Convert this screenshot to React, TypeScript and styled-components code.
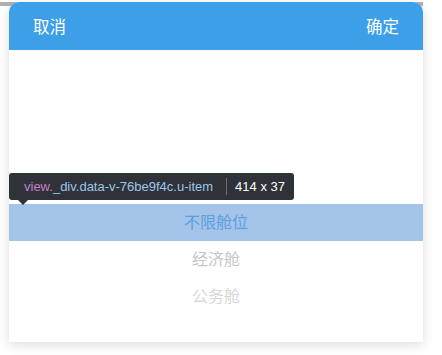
import React from "react";
import styled, { createGlobalStyle } from "styled-components";

const GlobalStyle = createGlobalStyle`
  html, body {
    margin: 0;
    padding: 0;
    background: #ffffff;
  }
  body {
    font-family: "Noto Sans CJK SC", "Liberation Sans", sans-serif;
  }
`;

const Page = styled.div`
  width: 442px;
  height: 355px;
  padding-left: 9px;
  box-sizing: border-box;
  background: linear-gradient(to right, #b1b1b1 0 423px, transparent 423px) top / 100% 4px no-repeat;
`;

const Picker = styled.div`
  position: relative;
  width: 414px;
  margin-top: 2px;
  background: #ffffff;
  border-radius: 10px 10px 0 0;
  box-shadow: 0 3px 12px rgba(0, 0, 0, 0.14);
`;

const Toolbar = styled.div`
  height: 48px;
  display: flex;
  align-items: center;
  justify-content: space-between;
  padding: 0 24px;
  background: #3d9fe8;
  border-radius: 10px 10px 0 0;
`;

const ToolButton = styled.span`
  color: #ffffff;
  font-size: 16.5px;
  line-height: 1;
`;

const Wheel = styled.div`
  padding: 154px 0 27px;
  display: flex;
  flex-direction: column;
`;

const Item = styled.div<{ $active?: boolean; $tone: string }>`
  height: 37px;
  box-sizing: border-box;
  padding-bottom: 3px;
  display: flex;
  align-items: center;
  justify-content: center;
  font-size: 16px;
  color: ${(p) => p.$tone};
  background: ${(p) => (p.$active ? "#a4c3e8" : "transparent")};
`;

const Tooltip = styled.div`
  position: absolute;
  left: 0;
  top: 171px;
  height: 27px;
  box-sizing: border-box;
  display: flex;
  align-items: center;
  padding: 0 9px 0 15px;
  background: #2f3238;
  border-radius: 3px;
  font-family: "Liberation Sans", "Helvetica", sans-serif;
  font-size: 13px;
  white-space: nowrap;

  &::after {
    content: "";
    position: absolute;
    left: 9px;
    bottom: -5px;
    border-left: 5px solid transparent;
    border-right: 5px solid transparent;
    border-top: 5px solid #2f3238;
  }
`;

const Tag = styled.span`
  color: #c880c8;
`;

const Selector = styled.span`
  color: #9ec5ea;
`;

const Divider = styled.span`
  width: 1px;
  height: 17px;
  margin: 0 8px 0 13px;
  background: #6a6d73;
`;

const Size = styled.span`
  color: #ffffff;
`;

const items = [
  { label: "不限舱位", tone: "#5b9fe0", active: true },
  { label: "经济舱", tone: "#c6c6c6" },
  { label: "公务舱", tone: "#d6d6d6" },
];

const App = (): JSX.Element => (
  <>
    <GlobalStyle />
    <Page>
      <Picker>
        <Toolbar>
          <ToolButton>取消</ToolButton>
          <ToolButton>确定</ToolButton>
        </Toolbar>
        <Wheel>
          {items.map((it) => (
            <Item key={it.label} $active={it.active} $tone={it.tone}>
              {it.label}
            </Item>
          ))}
        </Wheel>
        <Tooltip>
          <Tag>view.</Tag>
          <Selector>_div.data-v-76be9f4c.u-item</Selector>
          <Divider />
          <Size>414 x 37</Size>
        </Tooltip>
      </Picker>
    </Page>
  </>
);

export default App;
